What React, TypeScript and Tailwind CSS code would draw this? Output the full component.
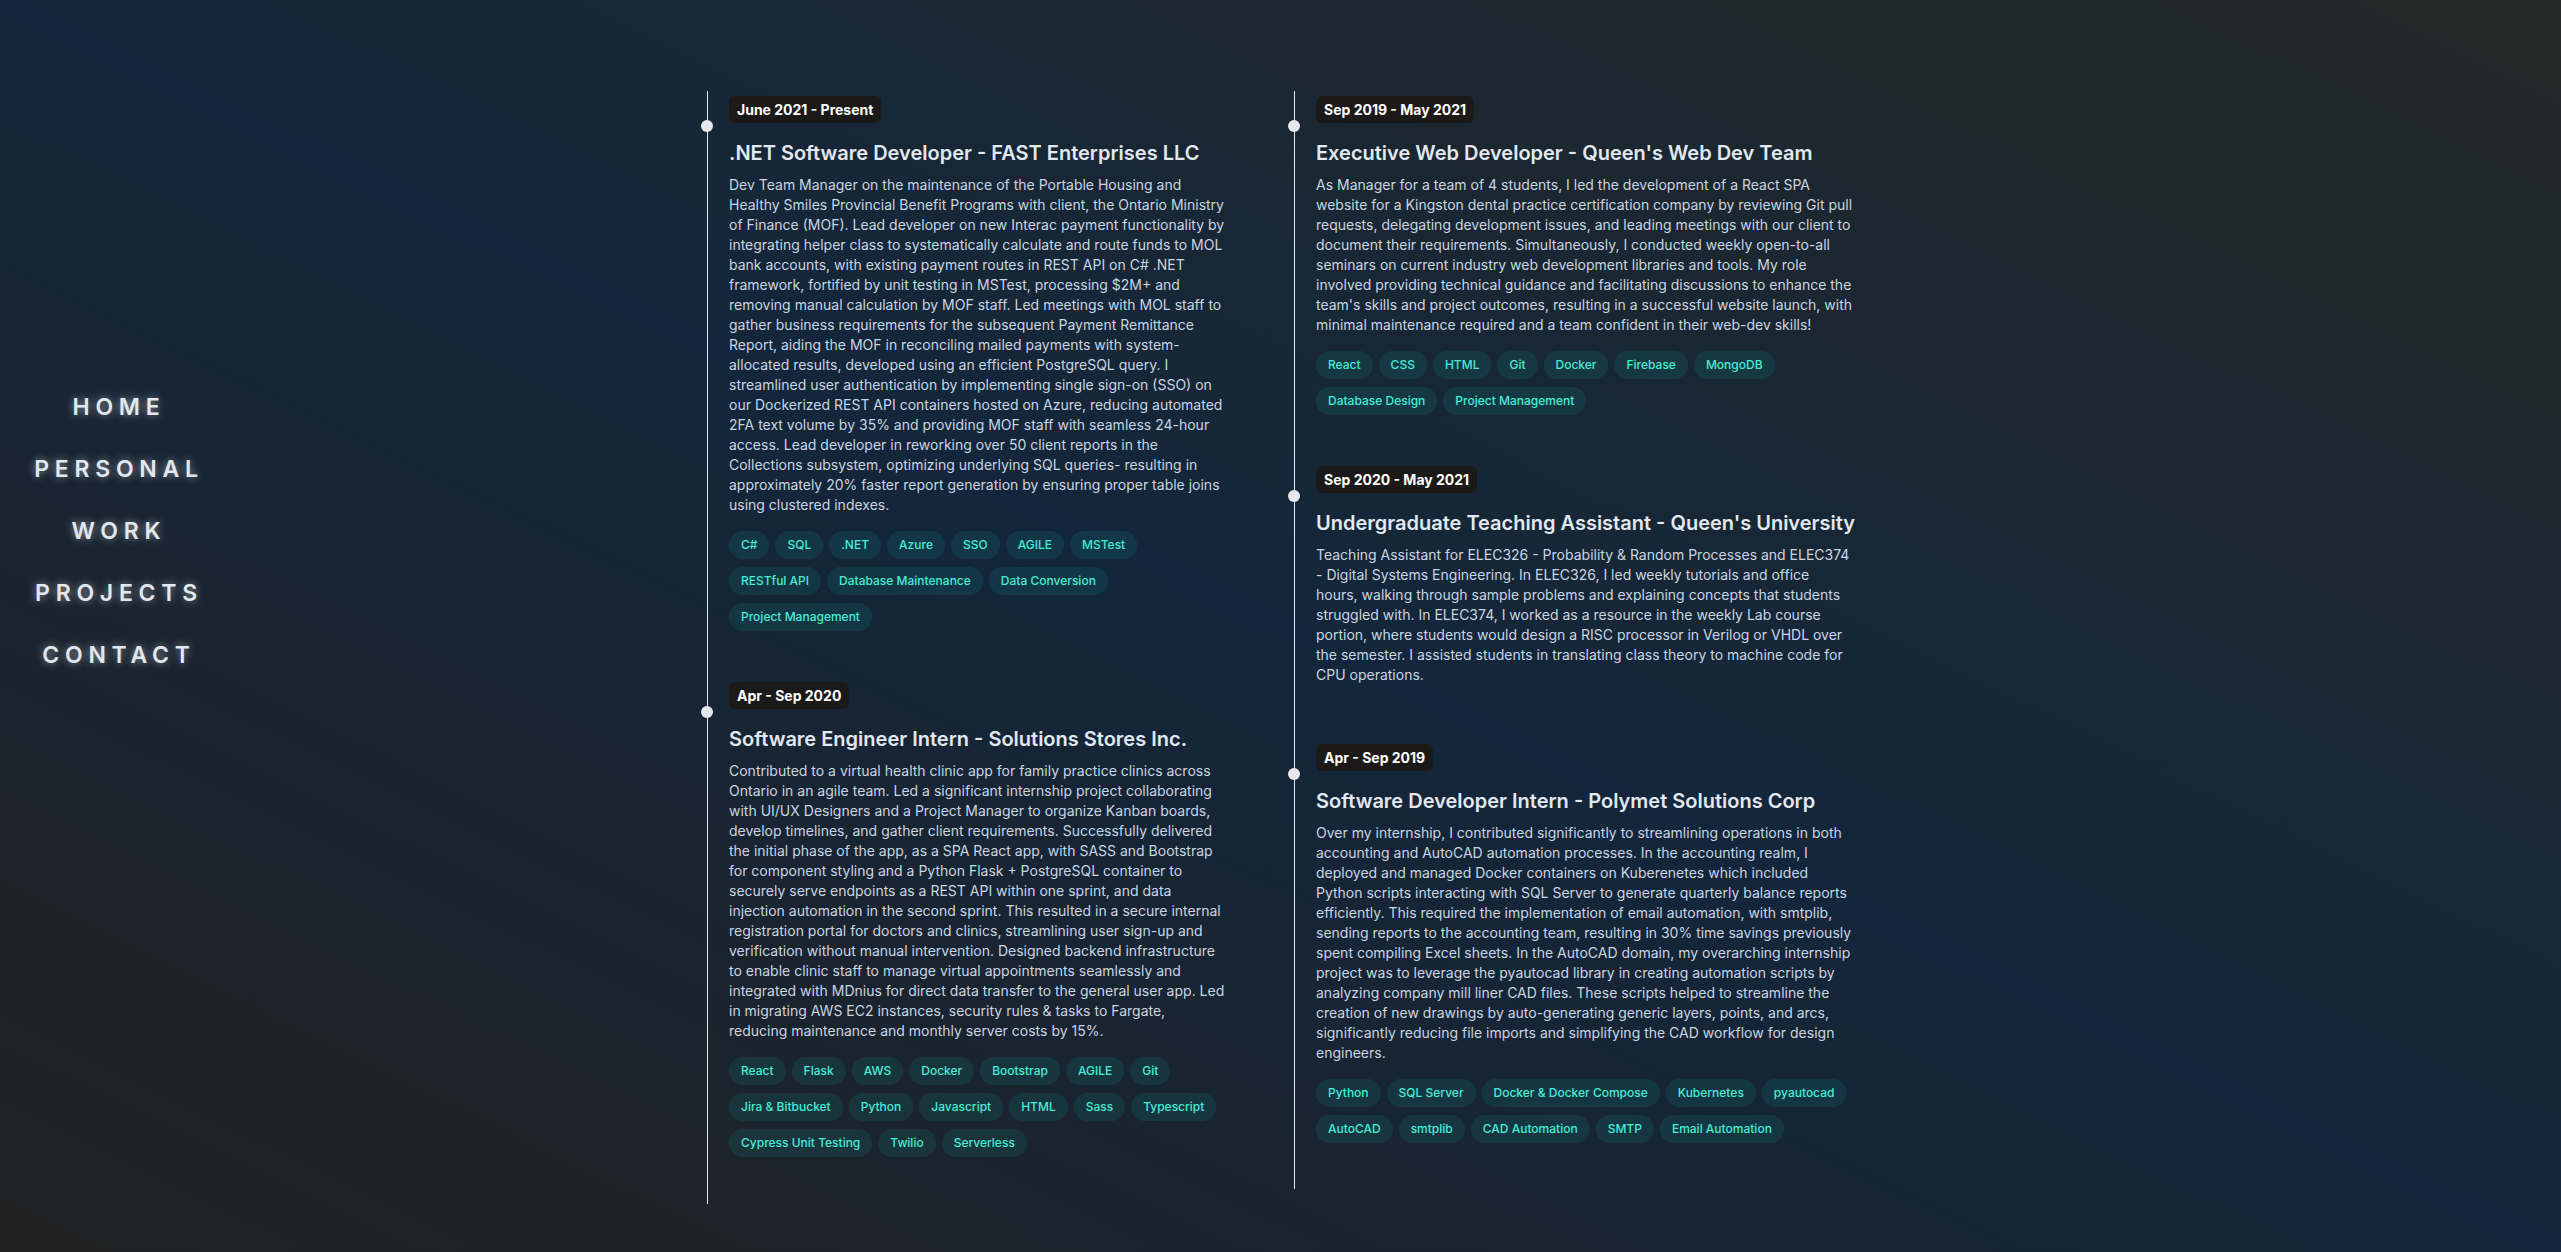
import React from "react";

type Job = {
  date: string;
  title: string;
  body: string;
  tags: string[];
};

const navItems = ["HOME", "PERSONAL", "WORK", "PROJECTS", "CONTACT"];

const leftJobs: Job[] = [
  {
    date: "June 2021 - Present",
    title: ".NET Software Developer - FAST Enterprises LLC",
    body: "Dev Team Manager on the maintenance of the Portable Housing and Healthy Smiles Provincial Benefit Programs with client, the Ontario Ministry of Finance (MOF). Lead developer on new Interac payment functionality by integrating helper class to systematically calculate and route funds to MOL bank accounts, with existing payment routes in REST API on C# .NET framework, fortified by unit testing in MSTest, processing $2M+ and removing manual calculation by MOF staff. Led meetings with MOL staff to gather business requirements for the subsequent Payment Remittance Report, aiding the MOF in reconciling mailed payments with system-allocated results, developed using an efficient PostgreSQL query. I streamlined user authentication by implementing single sign-on (SSO) on our Dockerized REST API containers hosted on Azure, reducing automated 2FA text volume by 35% and providing MOF staff with seamless 24-hour access. Lead developer in reworking over 50 client reports in the Collections subsystem, optimizing underlying SQL queries- resulting in approximately 20% faster report generation by ensuring proper table joins using clustered indexes.",
    tags: [
      "C#",
      "SQL",
      ".NET",
      "Azure",
      "SSO",
      "AGILE",
      "MSTest",
      "RESTful API",
      "Database Maintenance",
      "Data Conversion",
      "Project Management",
    ],
  },
  {
    date: "Apr - Sep 2020",
    title: "Software Engineer Intern - Solutions Stores Inc.",
    body: "Contributed to a virtual health clinic app for family practice clinics across Ontario in an agile team. Led a significant internship project collaborating with UI/UX Designers and a Project Manager to organize Kanban boards, develop timelines, and gather client requirements. Successfully delivered the initial phase of the app, as a SPA React app, with SASS and Bootstrap for component styling and a Python Flask + PostgreSQL container to securely serve endpoints as a REST API within one sprint, and data injection automation in the second sprint. This resulted in a secure internal registration portal for doctors and clinics, streamlining user sign-up and verification without manual intervention. Designed backend infrastructure to enable clinic staff to manage virtual appointments seamlessly and integrated with MDnius for direct data transfer to the general user app. Led in migrating AWS EC2 instances, security rules & tasks to Fargate, reducing maintenance and monthly server costs by 15%.",
    tags: [
      "React",
      "Flask",
      "AWS",
      "Docker",
      "Bootstrap",
      "AGILE",
      "Git",
      "Jira & Bitbucket",
      "Python",
      "Javascript",
      "HTML",
      "Sass",
      "Typescript",
      "Cypress Unit Testing",
      "Twilio",
      "Serverless",
    ],
  },
];

const rightJobs: Job[] = [
  {
    date: "Sep 2019 - May 2021",
    title: "Executive Web Developer - Queen's Web Dev Team",
    body: "As Manager for a team of 4 students, I led the development of a React SPA website for a Kingston dental practice certification company by reviewing Git pull requests, delegating development issues, and leading meetings with our client to document their requirements. Simultaneously, I conducted weekly open-to-all seminars on current industry web development libraries and tools. My role involved providing technical guidance and facilitating discussions to enhance the team's skills and project outcomes, resulting in a successful website launch, with minimal maintenance required and a team confident in their web-dev skills!",
    tags: [
      "React",
      "CSS",
      "HTML",
      "Git",
      "Docker",
      "Firebase",
      "MongoDB",
      "Database Design",
      "Project Management",
    ],
  },
  {
    date: "Sep 2020 - May 2021",
    title: "Undergraduate Teaching Assistant - Queen's University",
    body: "Teaching Assistant for ELEC326 - Probability & Random Processes and ELEC374 - Digital Systems Engineering. In ELEC326, I led weekly tutorials and office hours, walking through sample problems and explaining concepts that students struggled with. In ELEC374, I worked as a resource in the weekly Lab course portion, where students would design a RISC processor in Verilog or VHDL over the semester. I assisted students in translating class theory to machine code for CPU operations.",
    tags: [],
  },
  {
    date: "Apr - Sep 2019",
    title: "Software Developer Intern - Polymet Solutions Corp",
    body: "Over my internship, I contributed significantly to streamlining operations in both accounting and AutoCAD automation processes. In the accounting realm, I deployed and managed Docker containers on Kuberenetes which included Python scripts interacting with SQL Server to generate quarterly balance reports efficiently. This required the implementation of email automation, with smtplib, sending reports to the accounting team, resulting in 30% time savings previously spent compiling Excel sheets. In the AutoCAD domain, my overarching internship project was to leverage the pyautocad library in creating automation scripts by analyzing company mill liner CAD files. These scripts helped to streamline the creation of new drawings by auto-generating generic layers, points, and arcs, significantly reducing file imports and simplifying the CAD workflow for design engineers.",
    tags: [
      "Python",
      "SQL Server",
      "Docker & Docker Compose",
      "Kubernetes",
      "pyautocad",
      "AutoCAD",
      "smtplib",
      "CAD Automation",
      "SMTP",
      "Email Automation",
    ],
  },
];

function Entry({ job }: { job: Job }) {
  return (
    <div className="relative">
      <span className="absolute -left-[28px] top-6 h-3 w-3 rounded-full bg-gray-200" />
      <span className="inline-block rounded-md bg-[#1c1a19] px-2 text-sm leading-[27px] font-bold text-white">
        {job.date}
      </span>
      <h3 className="mt-4 text-xl leading-7 font-semibold whitespace-nowrap text-slate-200">
        {job.title}
      </h3>
      <p className="mt-2 text-sm leading-5 text-slate-300">{job.body}</p>
      <ul className="mt-2 flex flex-wrap">
        {job.tags.map((tag) => (
          <li
            key={tag}
            className="mt-2 mr-1.5 rounded-full bg-teal-400/10 px-3 py-1 text-xs leading-5 font-medium text-teal-300"
          >
            {tag}
          </li>
        ))}
      </ul>
    </div>
  );
}

export default function App() {
  return (
    <div className="flex min-h-screen w-full bg-[linear-gradient(to_top_right,#222222_0%,#13263b_50%,#232926_100%)] font-['Inter',sans-serif]">
      <nav className="flex w-[238px] shrink-0 flex-col items-center gap-[30px] pt-[391px]">
        {navItems.map((item) => (
          <a
            key={item}
            href={`#${item.toLowerCase()}`}
            className="text-[23px] leading-8 font-semibold tracking-[0.25em] text-slate-200 [text-shadow:0_0_8px_rgba(255,255,255,0.55)]"
          >
            {item}
          </a>
        ))}
      </nav>
      <main className="flex items-start pt-[91px] pl-[469px]">
        <div className="w-[587px] shrink-0 border-l border-gray-200 pt-[5px] pb-[47px] pl-[21px]">
          <div className="flex w-[495.8px] flex-col gap-[51px]">
            {leftJobs.map((job) => (
              <Entry key={job.title} job={job} />
            ))}
          </div>
        </div>
        <div className="shrink-0 border-l border-gray-200 pt-[5px] pb-[46px] pl-[21px]">
          <div className="flex w-[537px] flex-col gap-[51px]">
            {rightJobs.map((job) => (
              <Entry key={job.title} job={job} />
            ))}
          </div>
        </div>
      </main>
    </div>
  );
}
